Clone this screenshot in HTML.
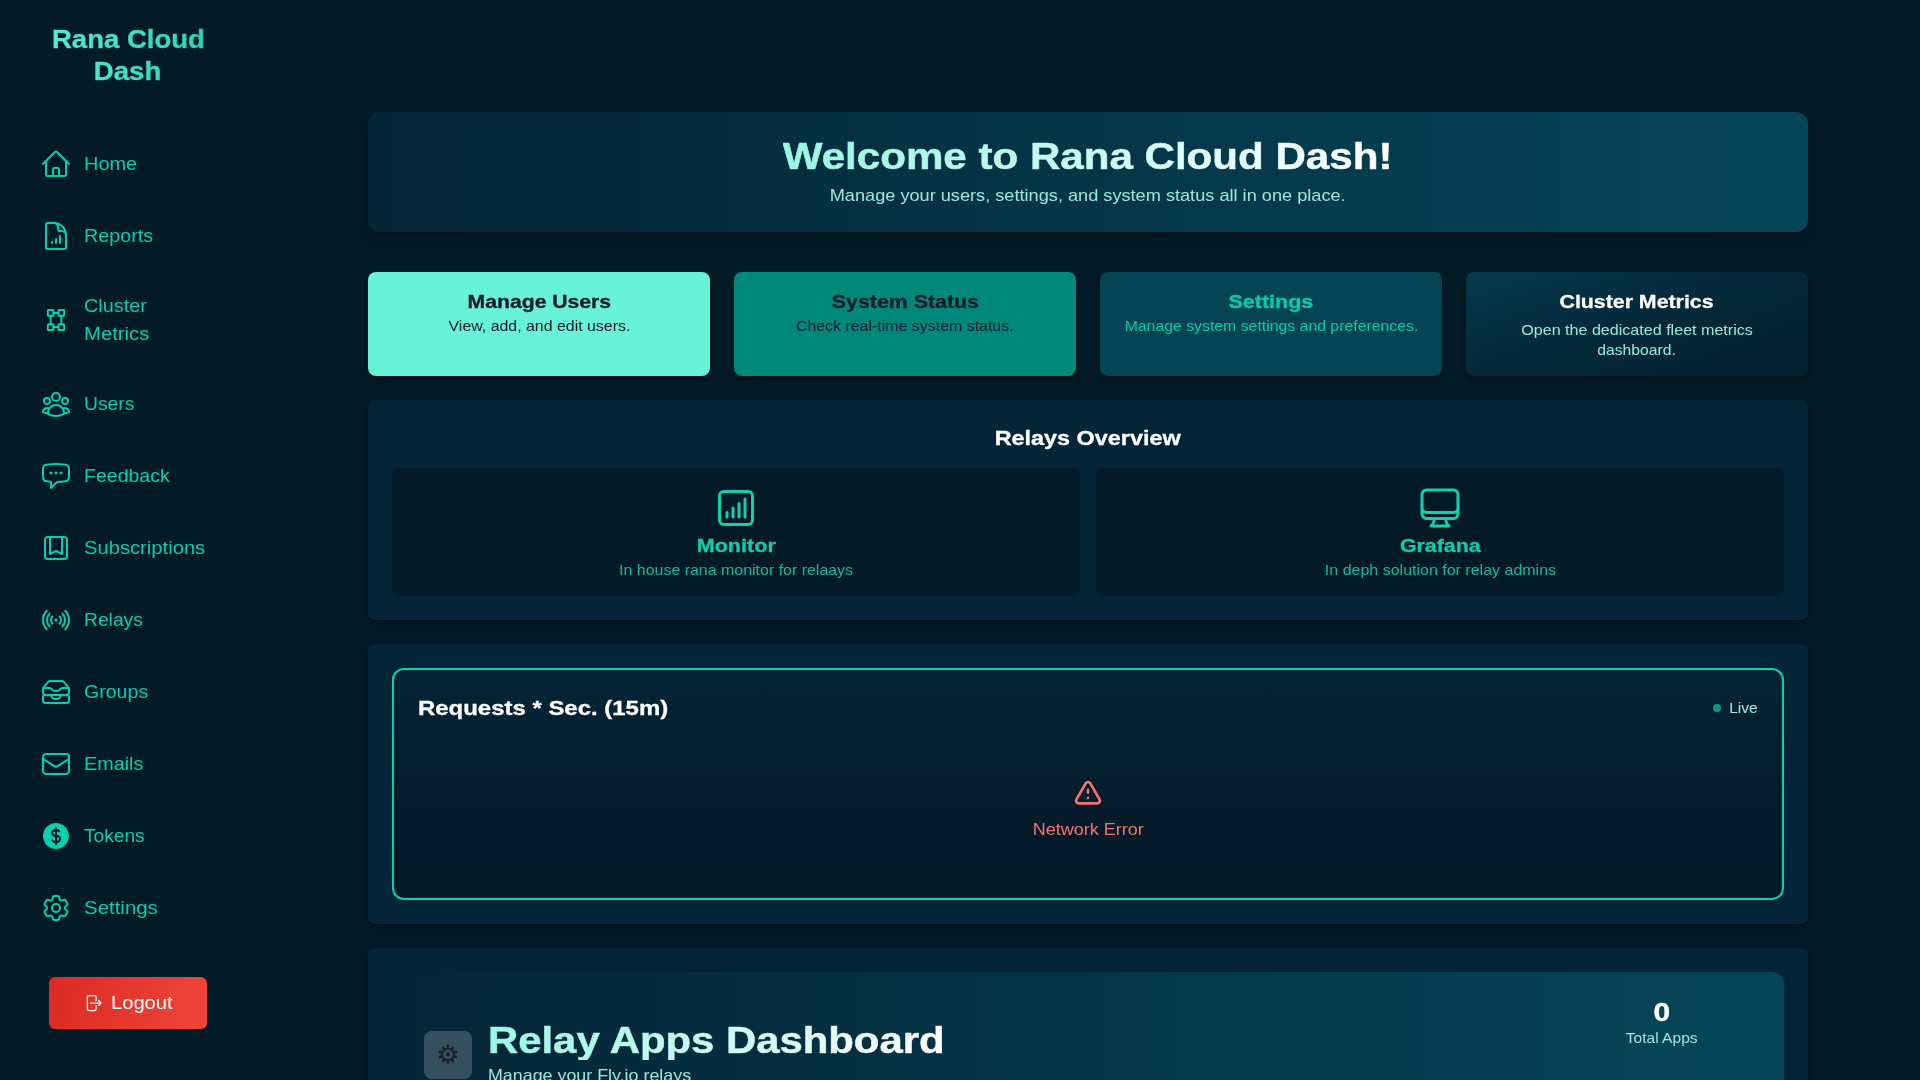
<!DOCTYPE html>
<html lang="en">
<head>
<meta charset="utf-8">
<title>Rana Cloud Dash</title>
<style>
*{box-sizing:border-box;margin:0;padding:0}
html,body{width:1920px;height:1080px;overflow:hidden;background:#031b27;color:#fff;
  font-family:"Liberation Sans",sans-serif;}
body{position:relative}
/* text helper: horizontally stretch Liberation to the metrics of the reference face */
.t{display:inline-block;white-space:nowrap;transform:scaleX(var(--sx,1));transform-origin:50% 50%}
.tl{transform-origin:0 50%}
svg{display:block}
h1,h2,h3,#brand,#stat b{-webkit-text-stroke:.016em currentColor}

/* ---------- sidebar ---------- */
#side{position:absolute;left:0;top:0;width:256px;height:1080px;background:#031b27}
#brand{position:absolute;left:0;top:23px;width:256px;text-align:center;color:#5eead4;
  font-weight:700;font-size:25px;line-height:32px}
#brand .t{-webkit-background-clip:text;background-clip:text;color:transparent}
#brand .g1{background-image:linear-gradient(90deg,#59e9d2,#28d5b9)}
#brand .g2{background-image:linear-gradient(90deg,#4be3cb,#36dac0)}
.nav{position:absolute;left:40px;height:32px;display:flex;align-items:center;color:#04cfae;
  font-size:18.7px;line-height:28px}
.nav svg{width:32px;height:32px;flex:none;margin-right:12px}
.nav .two{display:block}
#logout{position:absolute;left:49px;top:977px;width:158px;height:52px;border-radius:6px;
  background:linear-gradient(100deg,#dc2a22 0%,#ef463a 100%);color:#fff;font-size:18.7px;line-height:28px}
#logout svg{position:absolute;left:33.5px;top:16px;width:20px;height:20px}
#logout .t{position:absolute;left:62px;top:12px}

/* ---------- main ---------- */
#main{position:absolute;left:368px;top:0;width:1440px;height:1080px}
.panel{position:absolute;left:0;width:1440px;background:#042537;border-radius:8px;
  box-shadow:0 4px 6px -1px rgba(0,0,0,.22),0 2px 4px -2px rgba(0,0,0,.22)}
#banner{top:112px;height:120px;border-radius:12px;box-shadow:0 10px 15px -3px rgba(0,0,0,.2),0 4px 6px -4px rgba(0,0,0,.2);background:linear-gradient(90deg,#042537 0%,#054658 100%);text-align:center}
#banner h1{position:absolute;left:0;right:0;top:24px;font-size:37.5px;line-height:40px;font-weight:700}
#banner h1 .t{background:linear-gradient(90deg,#99f6e4 0%,#ffffff 100%);-webkit-background-clip:text;background-clip:text;color:transparent}
#banner p{position:absolute;left:0;right:0;top:72px;font-size:16.6px;line-height:24px;color:#98eadb}

.card{position:absolute;top:272px;width:342px;height:104px;border-radius:8px;text-align:center;
  box-shadow:0 4px 6px -1px rgba(0,0,0,.3),0 2px 4px -2px rgba(0,0,0,.3)}
.card h3{position:absolute;left:0;right:0;top:16px;font-size:18.7px;line-height:28px;font-weight:700}
.card p{position:absolute;left:0;right:0;top:44px;font-size:14.6px;line-height:20px}
#c1{left:0;background:#67f3d8;color:#0b1b26}
#c2{left:366px;background:#00897b;color:#081d2b}
#c3{left:732px;background:#044455;color:#04ccab}
#c4{left:1098px;background:linear-gradient(160deg,#05394d 0%,#042a3c 45%,#031e2c 100%);color:#fff}
#c4 p{top:48px;color:#95ebda}

#relays{top:400px;height:220px}
#relays h2{position:absolute;left:0;right:0;top:24px;text-align:center;font-size:20.8px;line-height:28px;font-weight:700;color:#fff}
.rcard{position:absolute;top:68px;width:688px;height:128px;border-radius:8px;background:#031b27;text-align:center;color:#10d0b0}
.rcard svg{position:absolute;left:320px;top:16px;width:48px;height:48px}
.rcard h3{position:absolute;left:0;right:0;top:64px;font-size:18.7px;line-height:28px;font-weight:700;color:#12cbab}
.rcard p{position:absolute;left:0;right:0;top:92px;font-size:14.6px;line-height:20px;color:#10b9a0}

#req{top:644px;height:280px}
#reqbox{position:absolute;left:24px;top:24px;width:1392px;height:232px;border:2px solid #0bcfae;border-radius:12px;
  background:linear-gradient(180deg,#042436 0%,#031c2a 60%,#031a27 100%)}
#reqbox h2{position:absolute;left:24px;top:24px;font-size:20.8px;line-height:28px;font-weight:700;color:#fff}
#live{position:absolute;right:24px;top:28px;font-size:14.6px;line-height:20px;color:#9aeede}
#dot{position:absolute;left:1319px;top:34px;width:8px;height:8px;border-radius:50%;background:#0d9488}
#err{position:absolute;left:0;right:0;top:108px;text-align:center;color:#f87171;font-size:16.6px;line-height:24px}
#err svg{margin:0 auto 8px;width:32px;height:32px}

#apps{top:948px;height:200px}
#appsbox{position:absolute;left:24px;top:24px;width:1392px;height:200px;border-radius:12px;
  background:linear-gradient(90deg,#042537 0%,#054658 100%)}
#gear{position:absolute;left:32px;top:59px;width:48px;height:48px;border-radius:8px;background:#34505d}
#gear svg{position:absolute;left:12px;top:12px;width:24px;height:24px}
#appsbox h2{position:absolute;left:96px;top:48px;font-size:37.5px;line-height:40px;font-weight:700}
#appsbox h2 .t{background:linear-gradient(90deg,#99f6e4 0%,#ffffff 100%);-webkit-background-clip:text;background-clip:text;color:transparent}
#appsbox .sub{position:absolute;left:96px;top:92px;font-size:16.6px;line-height:24px;color:#98eadb}
#stat{position:absolute;left:1170px;top:24px;width:200px;text-align:center}
#stat b{display:block;font-size:25px;line-height:32px;font-weight:700;color:#fff}
#stat span.l{display:block;font-size:14.6px;line-height:20px;color:#98eadb}
</style>
</head>
<body>
<aside id="side">
  <div id="brand"><span class="t g1" style="--sx:1.1008">Rana Cloud</span><br><span class="t g2" style="--sx:1.1040">Dash</span></div>
  <div class="nav" style="top:148px"><svg viewBox="0 0 24 24" fill="none" stroke="currentColor" stroke-width="1.5" stroke-linecap="round" stroke-linejoin="round"><path d="M2.25 12l8.954-8.955c.44-.439 1.152-.439 1.591 0L21.75 12M4.5 9.75v10.125c0 .621.504 1.125 1.125 1.125H9.75v-4.875c0-.621.504-1.125 1.125-1.125h2.25c.621 0 1.125.504 1.125 1.125V21h4.125c.621 0 1.125-.504 1.125-1.125V9.75M8.25 21h8.25"/></svg><span class="t tl" style="--sx:1.0661">Home</span></div>
  <div class="nav" style="top:220px"><svg viewBox="0 0 24 24" fill="none" stroke="currentColor" stroke-width="1.5" stroke-linecap="round" stroke-linejoin="round"><path d="M19.5 14.25v-2.625a3.375 3.375 0 00-3.375-3.375h-1.5A1.125 1.125 0 0113.5 7.125v-1.5a3.375 3.375 0 00-3.375-3.375H8.25M9 16.5v.75m3-3v3M15 12v5.25m-4.5-15H5.625c-.621 0-1.125.504-1.125 1.125v17.25c0 .621.504 1.125 1.125 1.125h12.75c.621 0 1.125-.504 1.125-1.125V11.25a9 9 0 00-9-9z"/></svg><span class="t tl" style="--sx:1.0552">Reports</span></div>
  <div class="nav" style="top:304px"><svg viewBox="0 0 24 24" fill="none" stroke="currentColor" stroke-width="1.5" stroke-linecap="round" stroke-linejoin="round"><rect x="5.9" y="4.55" width="4.2" height="4.3" rx=".4"/><rect x="13.9" y="4.55" width="4.2" height="4.3" rx=".4"/><rect x="5.9" y="15.15" width="4.2" height="4.3" rx=".4"/><rect x="13.9" y="15.15" width="4.2" height="4.3" rx=".4"/><path d="M10.1 6.7h3.8M10.1 17.3h3.8M8 8.85v6.3M16 8.85v6.3"/></svg><span><span class="t tl two" style="--sx:1.0610">Cluster</span><span class="t tl two" style="--sx:1.0851">Metrics</span></span></div>
  <div class="nav" style="top:388px"><svg viewBox="0 0 24 24" fill="none" stroke="currentColor" stroke-width="1.5" stroke-linecap="round" stroke-linejoin="round"><path d="M18 18.72a9.094 9.094 0 003.741-.479 3 3 0 00-4.682-2.72m.94 3.198l.001.031c0 .225-.012.447-.037.666A11.944 11.944 0 0112 21c-2.17 0-4.207-.576-5.963-1.584A6.062 6.062 0 016 18.719m12 0a5.971 5.971 0 00-.941-3.197m0 0A5.995 5.995 0 0012 12.75a5.995 5.995 0 00-5.058 2.772m0 0a3 3 0 00-4.681 2.72 8.986 8.986 0 003.74.477m.94-3.197a5.971 5.971 0 00-.94 3.197M15 6.75a3 3 0 11-6 0 3 3 0 016 0zm6 3a2.25 2.25 0 11-4.5 0 2.25 2.25 0 014.5 0zm-13.5 0a2.25 2.25 0 11-4.5 0 2.25 2.25 0 014.5 0z"/></svg><span class="t tl" style="--sx:1.0327">Users</span></div>
  <div class="nav" style="top:460px"><svg viewBox="0 0 24 24" fill="none" stroke="currentColor" stroke-width="1.5" stroke-linecap="round" stroke-linejoin="round"><path d="M8.625 9.75a.375.375 0 11-.75 0 .375.375 0 01.75 0zm0 0H8.25m4.125 0a.375.375 0 11-.75 0 .375.375 0 01.75 0zm0 0H12m4.125 0a.375.375 0 11-.75 0 .375.375 0 01.75 0zm0 0h-.375m-13.5 3.01c0 1.6 1.123 2.994 2.707 3.227 1.087.16 2.185.283 3.293.369V21l4.184-4.183a1.14 1.14 0 01.778-.332 48.294 48.294 0 005.83-.498c1.585-.233 2.708-1.626 2.708-3.228V6.741c0-1.602-1.123-2.995-2.707-3.228A48.394 48.394 0 0012 3c-2.392 0-4.744.175-7.043.513C3.373 3.746 2.25 5.14 2.25 6.741v6.018z"/></svg><span class="t tl" style="--sx:1.0445">Feedback</span></div>
  <div class="nav" style="top:532px"><svg viewBox="0 0 24 24" fill="none" stroke="currentColor" stroke-width="1.5" stroke-linecap="round" stroke-linejoin="round"><path d="M16.5 3.75V16.5L12 14.25 7.5 16.5V3.75m9 0H18A2.25 2.25 0 0120.25 6v12A2.25 2.25 0 0118 20.25H6A2.25 2.25 0 013.75 18V6A2.25 2.25 0 016 3.75h1.5m9 0h-9"/></svg><span class="t tl" style="--sx:1.0805">Subscriptions</span></div>
  <div class="nav" style="top:604px"><svg viewBox="0 0 24 24" fill="none" stroke="currentColor" stroke-width="1.5" stroke-linecap="round" stroke-linejoin="round"><path d="M9.348 14.651a3.75 3.75 0 010-5.303m5.304 0a3.75 3.75 0 010 5.303m-7.425 2.122a6.75 6.75 0 010-9.546m9.546 0a6.75 6.75 0 010 9.546M5.106 18.894c-3.808-3.808-3.808-9.98 0-13.789m13.788 0c3.808 3.808 3.808 9.981 0 13.79M12 12h.008v.007H12V12zm.375 0a.375.375 0 11-.75 0 .375.375 0 01.75 0z"/></svg><span class="t tl" style="--sx:1.0301">Relays</span></div>
  <div class="nav" style="top:676px"><svg viewBox="0 0 24 24" fill="none" stroke="currentColor" stroke-width="1.5" stroke-linecap="round" stroke-linejoin="round"><path d="M7.875 14.25l1.214 1.942a2.25 2.25 0 001.908 1.058h2.006c.776 0 1.497-.4 1.908-1.058l1.214-1.942M2.41 9h4.636a2.25 2.25 0 011.872 1.002l.164.246a2.25 2.25 0 001.872 1.002h2.092a2.25 2.25 0 001.872-1.002l.164-.246A2.25 2.25 0 0116.954 9h4.636M2.41 9a2.25 2.25 0 00-.16.832V12a2.25 2.25 0 002.25 2.25h15A2.25 2.25 0 0021.75 12V9.832c0-.287-.055-.57-.16-.832M2.41 9a2.25 2.25 0 01.382-.632l3.285-3.832a2.25 2.25 0 011.708-.786h8.43c.657 0 1.281.287 1.709.786l3.284 3.832c.163.19.291.404.382.632M4.5 20.25h15A2.25 2.25 0 0021.75 18v-2.625c0-.621-.504-1.125-1.125-1.125H3.375c-.621 0-1.125.504-1.125 1.125V18a2.25 2.25 0 002.25 2.25z"/></svg><span class="t tl" style="--sx:1.0472">Groups</span></div>
  <div class="nav" style="top:748px"><svg viewBox="0 0 24 24" fill="none" stroke="currentColor" stroke-width="1.5" stroke-linecap="round" stroke-linejoin="round"><path d="M21.75 6.75v10.5a2.25 2.25 0 01-2.25 2.25h-15a2.25 2.25 0 01-2.25-2.25V6.75m19.5 0A2.25 2.25 0 0019.5 4.5h-15a2.25 2.25 0 00-2.25 2.25m19.5 0v.243a2.25 2.25 0 01-1.07 1.916l-7.5 4.615a2.25 2.25 0 01-2.36 0L3.32 8.91a2.25 2.25 0 01-1.07-1.916V6.75"/></svg><span class="t tl" style="--sx:1.0580">Emails</span></div>
  <div class="nav" style="top:820px"><svg viewBox="0 0 24 24" fill="currentColor"><path d="M10.464 8.746c.227-.18.497-.311.786-.394v2.795a2.252 2.252 0 01-.786-.393c-.394-.313-.546-.681-.546-1.004 0-.323.152-.691.546-1.004zM12.750 15.662v-2.824c.347.085.664.228.921.421.427.32.579.686.579.991 0 .305-.152.671-.579.991a2.534 2.534 0 01-.921.42z"/><path fill-rule="evenodd" clip-rule="evenodd" d="M12 2.25c-5.385 0-9.75 4.365-9.75 9.750s4.365 9.750 9.750 9.750 9.750-4.365 9.750-9.750S17.385 2.250 12 2.250zM12.750 6a.750.750 0 00-1.500 0v.816a3.836 3.836 0 00-1.720.756c-.712.566-1.112 1.350-1.112 2.178 0 .829.400 1.612 1.113 2.178.502.400 1.102.647 1.719.756v2.978a2.536 2.536 0 01-.921-.421l-.879-.660a.750.750 0 00-.900 1.200l.879.660c.533.400 1.169.645 1.821.750V18a.750.750 0 001.500 0v-.810a4.124 4.124 0 001.821-.749c.745-.559 1.179-1.344 1.179-2.191 0-.847-.434-1.632-1.179-2.191a4.122 4.122 0 00-1.821-.750V8.354c.290.082.559.213.786.393l.415.330a.750.750 0 00.933-1.175l-.415-.330a3.836 3.836 0 00-1.719-.755V6z"/></svg><span class="t tl" style="--sx:1.0232">Tokens</span></div>
  <div class="nav" style="top:892px"><svg viewBox="0 0 24 24" fill="none" stroke="currentColor" stroke-width="1.5" stroke-linecap="round" stroke-linejoin="round"><path d="M9.594 3.94c.09-.542.56-.94 1.11-.94h2.593c.55 0 1.02.398 1.11.94l.213 1.281c.063.374.313.686.645.87.074.04.147.083.22.127.324.196.72.257 1.075.124l1.217-.456a1.125 1.125 0 011.37.49l1.296 2.247a1.125 1.125 0 01-.26 1.431l-1.003.827c-.293.24-.438.613-.431.992a6.759 6.759 0 010 .255c-.007.378.138.75.43.99l1.005.828c.424.35.534.954.26 1.43l-1.298 2.247a1.125 1.125 0 01-1.369.491l-1.217-.456c-.355-.133-.75-.072-1.076.124a6.57 6.57 0 01-.22.128c-.331.183-.581.495-.644.869l-.213 1.28c-.09.543-.56.941-1.11.941h-2.594c-.55 0-1.02-.398-1.11-.94l-.213-1.281c-.062-.374-.312-.686-.644-.87a6.52 6.52 0 01-.22-.127c-.325-.196-.72-.257-1.076-.124l-1.217.456a1.125 1.125 0 01-1.369-.49l-1.297-2.247a1.125 1.125 0 01.26-1.431l1.004-.827c.292-.24.437-.613.43-.992a6.932 6.932 0 010-.255c.007-.378-.138-.75-.43-.99l-1.004-.828a1.125 1.125 0 01-.26-1.43l1.297-2.247a1.125 1.125 0 011.37-.491l1.216.456c.356.133.751.072 1.076-.124.072-.044.146-.087.22-.128.332-.183.582-.495.644-.869l.214-1.281z"/><path d="M15 12a3 3 0 11-6 0 3 3 0 016 0z"/></svg><span class="t tl" style="--sx:1.0932">Settings</span></div>
  <div id="logout">
    <svg viewBox="0 0 24 24" fill="none" stroke="#fff" stroke-width="1.5" stroke-linecap="round" stroke-linejoin="round"><path d="M15.75 9V5.25A2.25 2.25 0 0013.5 3h-6a2.25 2.25 0 00-2.25 2.25v13.5A2.25 2.25 0 007.5 21h6a2.25 2.25 0 002.25-2.25V15m3 0l3-3m0 0l-3-3m3 3H9"/></svg>
    <span class="t tl" style="--sx:1.0782">Logout</span>
  </div>
</aside>

<main id="main">
  <section id="banner" class="panel">
    <h1><span class="t" style="--sx:1.1226">Welcome to Rana Cloud Dash!</span></h1>
    <p><span class="t" style="--sx:1.0946">Manage your users, settings, and system status all in one place.</span></p>
  </section>

  <div class="card" id="c1"><h3><span class="t" style="--sx:1.1326">Manage Users</span></h3><p><span class="t" style="--sx:1.0894">View, add, and edit users.</span></p></div>
  <div class="card" id="c2"><h3><span class="t" style="--sx:1.1421">System Status</span></h3><p><span class="t" style="--sx:1.0912">Check real-time system status.</span></p></div>
  <div class="card" id="c3"><h3><span class="t" style="--sx:1.1524">Settings</span></h3><p><span class="t" style="--sx:1.0838">Manage system settings and preferences.</span></p></div>
  <div class="card" id="c4"><h3><span class="t" style="--sx:1.1408">Cluster Metrics</span></h3><p><span class="t" style="--sx:1.1024">Open the dedicated fleet metrics</span><br><span class="t" style="--sx:1.0751">dashboard.</span></p></div>

  <section id="relays" class="panel">
    <h2><span class="t" style="--sx:1.1250">Relays Overview</span></h2>
    <div class="rcard" style="left:24px">
      <svg viewBox="0 0 24 24" fill="none" stroke="currentColor" stroke-width="1.5" stroke-linecap="round" stroke-linejoin="round"><path d="M7.5 14.25v2.25m3-4.5v4.5m3-6.75v6.75m3-9v9M6 20.25h12A2.25 2.25 0 0020.25 18V6A2.25 2.25 0 0018 3.75H6A2.25 2.25 0 003.75 6v12A2.25 2.25 0 006 20.25z"/></svg>
      <h3><span class="t" style="--sx:1.1551">Monitor</span></h3>
      <p><span class="t" style="--sx:1.0926">In house rana monitor for relaays</span></p>
    </div>
    <div class="rcard" style="left:728px">
      <svg viewBox="0 0 24 24" fill="none" stroke="currentColor" stroke-width="1.5" stroke-linecap="round" stroke-linejoin="round"><path d="M9 17.25v1.007a3 3 0 01-.879 2.122L7.5 21h9l-.621-.621A3 3 0 0115 18.257V17.25m6-12V15a2.25 2.25 0 01-2.25 2.25H5.25A2.25 2.25 0 013 15V5.25m18 0A2.25 2.25 0 0018.75 3H5.25A2.25 2.25 0 003 5.25m18 0V12a2.25 2.25 0 01-2.25 2.25H5.25A2.25 2.25 0 013 12V5.25"/></svg>
      <h3><span class="t" style="--sx:1.1431">Grafana</span></h3>
      <p><span class="t" style="--sx:1.0961">In deph solution for relay admins</span></p>
    </div>
  </section>

  <section id="req" class="panel">
    <div id="reqbox">
      <h2><span class="t tl" style="--sx:1.1513">Requests * Sec. (15m)</span></h2>
      <span id="dot"></span>
      <div id="live"><span class="t" style="--sx:1.0677;transform-origin:100% 50%">Live</span></div>
      <div id="err">
        <svg viewBox="0 0 24 24" fill="none" stroke="currentColor" stroke-width="2" stroke-linecap="round" stroke-linejoin="round"><path d="M12 9v2m0 4h.01m-6.938 4h13.856c1.54 0 2.502-1.667 1.732-3L13.732 4c-.77-1.333-2.694-1.333-3.464 0L3.34 16c-.77 1.333.192 3 1.732 3z"/></svg>
        <span class="t" style="--sx:1.0835">Network Error</span>
      </div>
    </div>
  </section>

  <section id="apps" class="panel">
    <div id="appsbox">
      <div id="gear"><svg viewBox="0 0 24 24" fill="none" stroke="#1b1f24"><circle cx="11.9" cy="11.4" r="5.85" stroke-width="1.8"/><path d="M11.90 5.20L11.90 2.00M15.54 6.38L17.43 3.80M17.80 9.48L20.84 8.50M17.80 13.32L20.84 14.30M15.54 16.42L17.43 19.00M11.90 17.60L11.90 20.80M8.26 16.42L6.37 19.00M6.00 13.32L2.96 14.30M6.00 9.48L2.96 8.50M8.26 6.38L6.37 3.80" stroke-width="2.5" stroke-linecap="butt"/><circle cx="11.9" cy="11.4" r="1.9" fill="#1b1f24" stroke="none"/></svg></div>
      <h2><span class="t tl" style="--sx:1.1159">Relay Apps Dashboard</span></h2>
      <div class="sub"><span class="t tl" style="--sx:1.0758">Manage your Fly.io relays</span></div>
      <div id="stat"><b><span class="t" style="--sx:1.2011">0</span></b><span class="l"><span class="t" style="--sx:1.0661">Total Apps</span></span></div>
    </div>
  </section>
</main>
</body>
</html>
